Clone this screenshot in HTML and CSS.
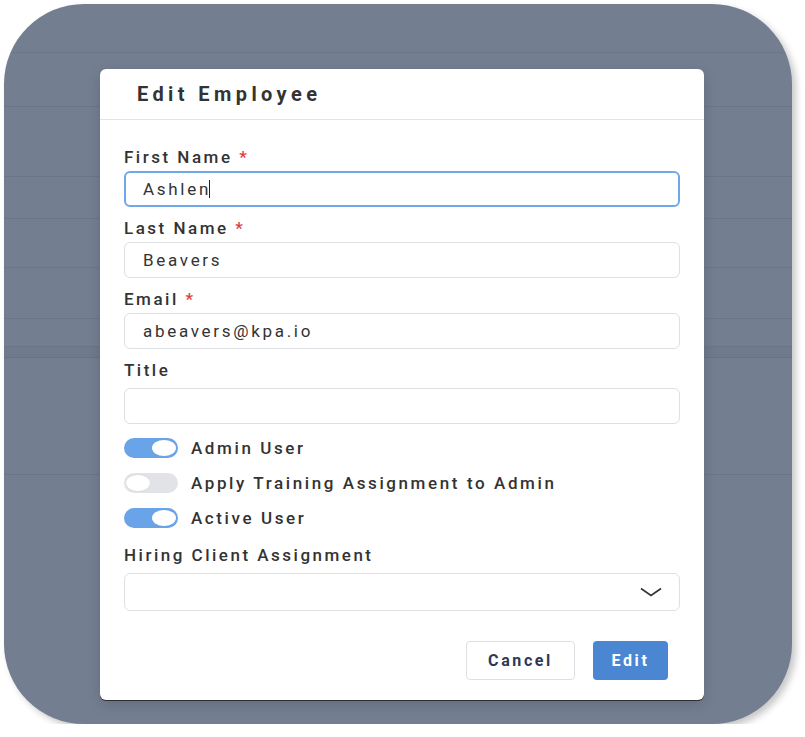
FILE: index.html
```html
<!DOCTYPE html>
<html lang="en">
<head>
    <meta charset="UTF-8">
    <meta name="viewport" content="width=device-width, initial-scale=1.0">
    <title>Edit Employee</title>
    <link rel="stylesheet" href="styles.css">
</head>
<body>

<div class="screen">
    <!-- page behind the overlay -->
    <div class="backdrop">
        <div class="bg-row h49"></div>
        <div class="bg-row h54"></div>
        <div class="bg-row h70"></div>
        <div class="bg-row h42"></div>
        <div class="bg-row h49"></div>
        <div class="bg-row h51"></div>
        <div class="bg-row h28"></div>
        <div class="bg-row h11 dark"></div>
        <div class="bg-row h117"></div>
    </div>

    <div class="modal">
        <div class="modal-header">
            <h2>Edit Employee</h2>
        </div>

        <div class="modal-body">
            <label class="field-label">First Name <span class="req">*</span></label>
            <div class="input focused">Ashlen<span class="caret"></span></div>

            <label class="field-label">Last Name <span class="req">*</span></label>
            <div class="input">Beavers</div>

            <label class="field-label">Email <span class="req">*</span></label>
            <div class="input">abeavers@kpa.io</div>

            <label class="field-label wide">Title</label>
            <div class="input last"></div>

            <div class="toggle-row">
                <span class="toggle on"><span class="knob"></span></span>
                <span class="toggle-label">Admin User</span>
            </div>
            <div class="toggle-row">
                <span class="toggle"><span class="knob"></span></span>
                <span class="toggle-label">Apply Training Assignment to Admin</span>
            </div>
            <div class="toggle-row last">
                <span class="toggle on"><span class="knob"></span></span>
                <span class="toggle-label">Active User</span>
            </div>

            <label class="field-label wide">Hiring Client Assignment</label>
            <div class="select">
                <svg width="22" height="10" viewBox="0 0 22 10">
                    <polyline points="1,1.5 11,8.5 21,1.5" fill="none" stroke="#333" stroke-width="1.6"/>
                </svg>
            </div>
        </div>

        <div class="modal-footer">
            <button class="btn btn-cancel">Cancel</button>
            <button class="btn btn-primary">Edit</button>
        </div>
    </div>
</div>

</body>
</html>
```

FILE: styles.css
```css
body { margin: 0; background: #fff; font-family: Roboto, "Liberation Sans", Arial, sans-serif; color: #333; }

.screen { position: relative; width: 788px; height: 720px; margin: 4px 0 0 4px; background: #737e91; border-radius: 80px; overflow: hidden; box-shadow: 4px 4px 7px rgba(0, 0, 0, 0.22); }

.backdrop { display: flex; flex-direction: column; }
.bg-row { border-bottom: 1px solid rgba(0, 0, 0, 0.06); box-sizing: border-box; }
.bg-row.dark { background: rgba(0, 0, 0, 0.03); }
.h49 { height: 49px; }
.h54 { height: 54px; }
.h70 { height: 70px; }
.h42 { height: 42px; }
.h51 { height: 51px; }
.h28 { height: 28px; }
.h11 { height: 11px; }
.h117 { height: 117px; }

.modal { position: absolute; left: 96px; top: 65px; width: 604px; background: #fff; border-radius: 6px; box-shadow: 0 1px 0 rgba(30, 30, 30, 0.8), 0 4px 14px rgba(0, 0, 0, 0.15); padding-bottom: 20px; }

.modal-header { height: 50px; border-bottom: 1px solid #e1e3e6; padding-left: 37px; }
.modal-header h2 { margin: 0; font-size: 20px; line-height: 50px; font-weight: 700; letter-spacing: 4.4px; color: #333; }

.modal-body { padding: 27px 24px 0; }

.field-label { display: block; font-size: 17px; line-height: 20px; font-weight: 500; letter-spacing: 2.5px; color: #333; margin-bottom: 4px; }
.field-label.wide { margin-bottom: 8px; }
.req { color: #e03a3a; }

.input { box-sizing: border-box; height: 36px; border: 1px solid #dcdfe4; border-radius: 6px; padding: 0 18px; font-size: 17px; line-height: 34px; letter-spacing: 2.7px; color: #333; margin-bottom: 11px; }
.input.focused { border: 2px solid #6fa8ea; padding: 0 17px; line-height: 32px; }
.input.last { margin-bottom: 14px; }
.caret { display: inline-block; width: 1px; height: 18px; background: #222; vertical-align: -3px; margin-left: -2px; }

.toggle-row { display: flex; align-items: center; gap: 13px; height: 20px; margin-bottom: 15px; }
.toggle-row.last { margin-bottom: 17px; }
.toggle { display: flex; align-items: center; width: 54px; height: 20px; border-radius: 10px; background: #e2e3e7; box-sizing: border-box; padding: 0 2px; }
.toggle .knob { width: 24px; height: 16px; border-radius: 50%; background: #fff; box-shadow: 0 0 1px rgba(0, 0, 0, 0.15); }
.toggle.on { background: #6aa4e8; justify-content: flex-end; }
.toggle-label { font-size: 17px; font-weight: 500; letter-spacing: 2.6px; color: #333; }

.select { box-sizing: border-box; height: 38px; border: 1px solid #dcdfe4; border-radius: 6px; display: flex; align-items: center; justify-content: flex-end; padding-right: 17px; }

.modal-footer { display: flex; justify-content: flex-end; gap: 18px; margin-top: 30px; padding-right: 36px; }
.btn { height: 39px; border-radius: 4px; font-family: Roboto, "Liberation Sans", Arial, sans-serif; font-size: 16px; font-weight: 700; letter-spacing: 2.6px; cursor: pointer; }
.btn-cancel { width: 109px; background: #fff; border: 1px solid #dcdfe4; color: #2c3a57; }
.btn-primary { width: 75px; background: #4a86d1; border: none; color: #fff; }
```
